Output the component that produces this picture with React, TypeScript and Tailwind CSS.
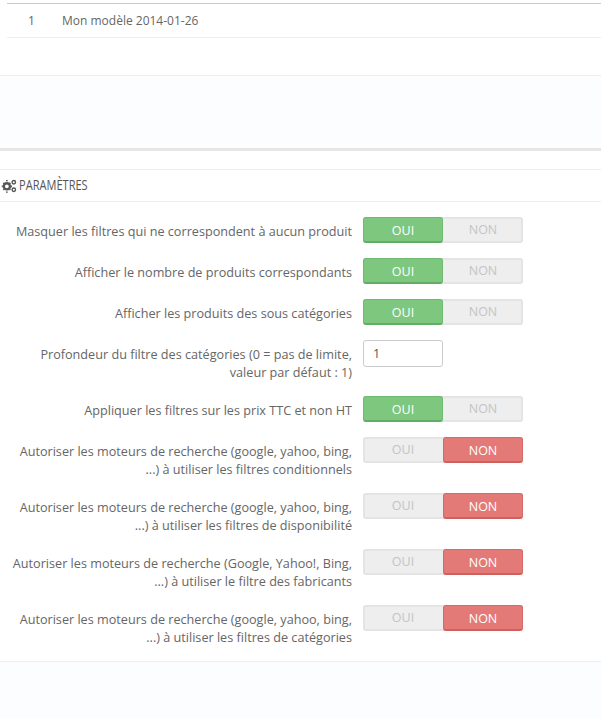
const Cogs = () => (
  <svg width="16" height="14" viewBox="0 0 15 13" className="shrink-0" fill="none" stroke="#555" >
    <circle cx="5.5" cy="6.8" r="2.9" strokeWidth="2.2" />
    <g strokeWidth="1.6" strokeLinecap="butt">
      <path d="M5.5 2V.8M5.5 12.8v-1.2M.7 6.8h1M9.3 6.8h1M2.2 3.5l.8.8M8 9.3l.8.8M8.8 3.5l-.8.8M3 9.3l-.8.8" />
    </g>
    <circle cx="12" cy="3" r="1.6" strokeWidth="1.3" />
    <circle cx="12" cy="10" r="1.6" strokeWidth="1.3" />
  </svg>
);

const Toggle = ({ on }: { on: boolean }) => (
  <div className="flex h-[26px] w-[160px] rounded-[3px] bg-[#eeeeee] shadow-[inset_0_0_0_2px_#e4e4e4] text-[12.5px] leading-[25px]">
    <div
      className={
        on
          ? "w-[80px] text-center rounded-[3px] bg-[#7dc77f] border-b-2 border-[#62ad65] border-x border-t border-x-[#6eba71] border-t-[#6eba71] text-white font-medium"
          : "w-[80px] text-center text-[#c4c4c4]"
      }
    >
      OUI
    </div>
    <div
      className={
        on
          ? "w-[80px] text-center text-[#c4c4c4]"
          : "w-[80px] text-center rounded-[3px] bg-[#e37a78] border-b-2 border-[#cf605e] border-x border-t border-x-[#d56a68] border-t-[#d56a68] text-white font-medium"
      }
    >
      NON
    </div>
  </div>
);

const Row = ({ label, children }: { label: React.ReactNode; children: React.ReactNode }) => (
  <div className="flex mb-[15px]">
    <div className="w-[352px] pt-[5px] text-right text-[12.65px] leading-[18px] text-[#666666] shrink-0">{label}</div>
    <div className="ml-[11px]">{children}</div>
  </div>
);

const rows: { label: React.ReactNode; on: boolean }[] = [
  { label: "Masquer les filtres qui ne correspondent à aucun produit", on: true },
  { label: "Afficher le nombre de produits correspondants", on: true },
  { label: "Afficher les produits des sous catégories", on: true },
];
const rows2: { label: React.ReactNode; on: boolean }[] = [
  { label: "Appliquer les filtres sur les prix TTC et non HT", on: true },
  { label: <>Autoriser les moteurs de recherche (google, yahoo, bing,<br />...) à utiliser les filtres conditionnels</>, on: false },
  { label: <>Autoriser les moteurs de recherche (google, yahoo, bing,<br />...) à utiliser les filtres de disponibilité</>, on: false },
  { label: <>Autoriser les moteurs de recherche (Google, Yahoo!, Bing,<br />...) à utiliser le filtre des fabricants</>, on: false },
  { label: <>Autoriser les moteurs de recherche (google, yahoo, bing,<br />...) à utiliser les filtres de catégories</>, on: false },
];

export default function App() {
  return (
    <div className="h-[719px] w-[601px] overflow-hidden bg-white font-['Open_Sans',sans-serif]">
      <div className="pt-[3px] h-[75px]">
        <div className="ml-[7px] border-t border-[#b5d2dc] border-b border-b-[#eeeeee] h-[35px] flex items-center text-[12px] text-[#666666]">
          <span className="w-[55px] pl-[21px]">1</span>
          <span>Mon modèle 2014-01-26</span>
        </div>
      </div>
      <div className="h-[76px] bg-[#fcfdfe] border-t border-[#eeeeee] border-b-[3px] border-b-[#e6e6e6]" />
      <div className="h-[18px]" />
      <div className="h-[33px] border-y border-[#eeeeee] flex items-center pl-[1px] gap-[3px] text-[#555555]">
        <Cogs />
        <span className="-mt-[2px] -ml-[1px] text-[14px] origin-left inline-block scale-x-[0.79] whitespace-nowrap">PARAMÈTRES</span>
      </div>
      <div className="pt-[15px] border-b border-[#eeeeee] h-[460px]">
        {rows.map((r, i) => (
          <Row key={i} label={r.label}><Toggle on={r.on} /></Row>
        ))}
        <Row label={<>Profondeur du filtre des catégories (0 = pas de limite,<br />valeur par défaut : 1)</>}>
          <input
            readOnly
            value="1"
            className="block h-[27px] w-[80px] rounded-[3px] border border-[#cccccc] bg-white px-[9px] text-[12.5px] text-[#555555] outline-none"
          />
        </Row>
        {rows2.map((r, i) => (
          <Row key={i} label={r.label}><Toggle on={r.on} /></Row>
        ))}
      </div>
      <div className="h-[58px] bg-[#fcfdfe]" />
    </div>
  );
}
